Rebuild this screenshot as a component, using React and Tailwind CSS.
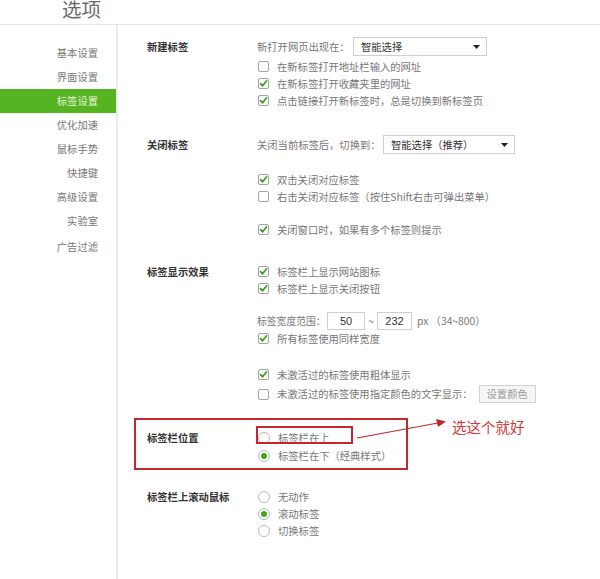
import React from "react";

const navItems = ["基本设置", "界面设置", "标签设置", "优化加速", "鼠标手势", "快捷键", "高级设置", "实验室"];

function Check({ on }) {
  return (
    <span className="w-[11px] h-[11px] border border-[#a3a3a3] rounded-[2px] bg-white flex items-center justify-center shrink-0">
      {on && (
        <svg width="9" height="9" viewBox="0 0 9 9" fill="none">
          <path d="M1.5 4.6 L3.6 6.8 L7.6 1.8" stroke="#3c9a1f" strokeWidth="1.7" strokeLinecap="round" strokeLinejoin="round" />
        </svg>
      )}
    </span>
  );
}

function Radio({ on }) {
  return (
    <span className="w-[12px] h-[12px] rounded-full border border-[#b8b8b8] bg-white flex items-center justify-center shrink-0">
      {on && <span className="w-[6px] h-[6px] rounded-full bg-[#45a61d]" />}
    </span>
  );
}

function Row({ h = "h-[17px]", mt = "", children }) {
  return <div className={`${h} ${mt} flex items-center whitespace-nowrap`}>{children}</div>;
}

function CheckRow({ on, text, mt, children }) {
  return (
    <Row mt={mt} h={children ? "h-[18px]" : "h-[17px]"}>
      <span className="ml-[1px]"><Check on={on} /></span>
      <span className="ml-[8px]">{text}</span>
      {children}
    </Row>
  );
}

function RadioRow({ on, text, h = "h-[17px]" }) {
  return (
    <Row h={h}>
      <span className="ml-[1px]"><Radio on={on} /></span>
      <span className="ml-[8px]">{text}</span>
    </Row>
  );
}

function Select({ w, text }) {
  return (
    <div className={`${w} h-[19px] border border-[#cfcfcf] bg-white flex items-center justify-between pl-[7px] pr-[6px] text-[#333]`}>
      <span>{text}</span>
      <svg width="7" height="4" viewBox="0 0 7 4"><path d="M0 0 L7 0 L3.5 4 Z" fill="#222" /></svg>
    </div>
  );
}

function Section({ label, mt, firstH = "h-[17px]", children }) {
  return (
    <div className={`${mt} flex`}>
      <div className={`w-[110px] ${firstH} flex items-center font-bold text-[#333] whitespace-nowrap`}>{label}</div>
      <div className="flex flex-col">{children}</div>
    </div>
  );
}

export default function App() {
  return (
    <div className="w-[600px] h-[579px] bg-white relative overflow-hidden font-['Noto_Sans_CJK_SC',sans-serif] text-[10.3px] text-[#777]">
      <div className="h-[25px] border-b border-[#e6e6e6] flex items-end pl-[62px] pb-[6px]">
        <span className="text-[19.5px] leading-none text-[#6a6a6a]">选项</span>
      </div>
      <div className="flex h-[554px]">
        <div className="w-[118px] border-r-2 border-[#ececec] pt-[16px] flex flex-col">
          {navItems.map((t) => (
            <div
              key={t}
              className={`h-[24px] flex items-center justify-end pr-[18px] ${t === "标签设置" ? "bg-[#54b421] text-[#e6f5d4]" : "text-[#777]"}`}
            >
              {t}
            </div>
          ))}
          <div className="h-[24px] mt-[2px] flex items-center justify-end pr-[18px]">广告过滤</div>
        </div>

        <div className="flex-1 pl-[29px] flex flex-col">
          <Section label="新建标签" mt="mt-[12px]" firstH="h-[19px]">
            <Row h="h-[19px]">
              <span className="w-[96px]">新打开网页出现在：</span>
              <Select w="w-[134px]" text="智能选择" />
            </Row>
            <CheckRow mt="mt-[2px]" on={false} text="在新标签打开地址栏输入的网址" />
            <CheckRow on text="在新标签打开收藏夹里的网址" />
            <CheckRow on text="点击链接打开新标签时，总是切换到新标签页" />
          </Section>

          <Section label="关闭标签" mt="mt-[26px]" firstH="h-[19px]">
            <Row h="h-[19px]">
              <span className="w-[126px]">关闭当前标签后，切换到：</span>
              <Select w="w-[132px]" text="智能选择（推荐）" />
            </Row>
            <CheckRow mt="mt-[17px]" on text="双击关闭对应标签" />
            <CheckRow on={false} text="右击关闭对应标签（按住Shift右击可弹出菜单）" />
            <CheckRow mt="mt-[16px]" on text="关闭窗口时，如果有多个标签则提示" />
          </Section>

          <Section label="标签显示效果" mt="mt-[25px]">
            <CheckRow on text="标签栏上显示网站图标" />
            <CheckRow on text="标签栏上显示关闭按钮" />
            <Row h="h-[18px]" mt="mt-[15px]">
              <span className="w-[70px] text-[9.8px]">标签宽度范围：</span>
              <span className="w-[38px] h-[18px] border border-[#cfcfcf] flex items-center justify-center text-[#333] text-[11px] font-['Liberation_Sans',sans-serif]">50</span>
              <span className="w-[12px] text-center">~</span>
              <span className="w-[35px] h-[18px] border border-[#cfcfcf] flex items-center justify-center text-[#333] text-[11px] font-['Liberation_Sans',sans-serif]">232</span>
              <span className="ml-[5px]">px （34~800）</span>
            </Row>
            <CheckRow on text="所有标签使用同样宽度" />
            <CheckRow mt="mt-[19px]" on text="未激活过的标签使用粗体显示" />
            <CheckRow mt="mt-[2px]" on={false} text="未激活过的标签使用指定颜色的文字显示：">
              <span className="ml-[6px] w-[57px] h-[18px] border border-[#d2d2d2] bg-[#f6f6f6] flex items-center justify-center text-[#999]">设置颜色</span>
            </CheckRow>
          </Section>

          <Section label="标签栏位置" mt="mt-[26px]" firstH="h-[18px]">
            <RadioRow h="h-[18px]" on={false} text="标签栏在上" />
            <RadioRow h="h-[18px]" on text="标签栏在下（经典样式）" />
          </Section>

          <Section label="标签栏上滚动鼠标" mt="mt-[23px]">
            <RadioRow on={false} text="无动作" />
            <RadioRow on text="滚动标签" />
            <RadioRow on={false} text="切换标签" />
          </Section>
        </div>
      </div>

      {/* 红色标注 */}
      <div className="absolute left-[134px] top-[418px] w-[274px] h-[52px] border-2 border-[#c1272d]" />
      <div className="absolute left-[256px] top-[426px] w-[97px] h-[18px] border-2 border-[#c1272d]" />
      <svg className="absolute left-0 top-0" width="600" height="579">
        <line x1="357" y1="438" x2="438" y2="423" stroke="#c1272d" strokeWidth="1.2" />
        <path d="M446 421.5 L436 419 L438 427 Z" fill="#c1272d" />
      </svg>
      <div className="absolute left-[452px] top-[417px] text-[14.5px] leading-[20px] text-[#cc3b3b]">选这个就好</div>
    </div>
  );
}
